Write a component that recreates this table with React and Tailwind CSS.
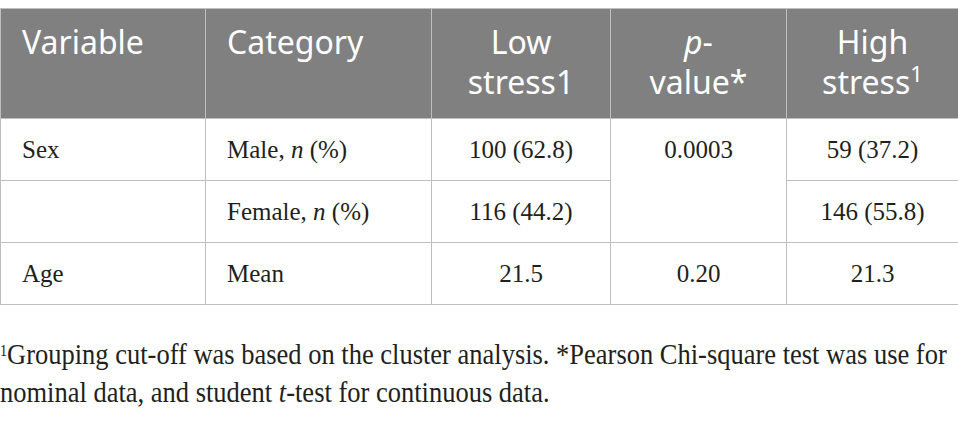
import React from "react";

const rows = [
  { variable: "Sex", category: "Male", low: "100 (62.8)", p: "0.0003", high: "59 (37.2)", pSpan: 2 },
  { variable: "", category: "Female", low: "116 (44.2)", p: null, high: "146 (55.8)" },
  { variable: "Age", category: "Mean", low: "21.5", p: "0.20", high: "21.3", plain: true },
];

const th = "border border-[#bfbfbf] align-top pt-[13px] pb-[16px] font-normal leading-[40px]";
const td = "border border-[#bfbfbf] h-[62px] align-middle";

export default function App() {
  return (
    <div className="w-[958px] h-[447px] bg-white pt-[8px] overflow-hidden">
      <table
        className="w-[958px] border-collapse table-fixed"
        style={{ fontFamily: "'Liberation Serif', serif" }}
      >
        <colgroup>
          <col className="w-[205px]" />
          <col className="w-[226px]" />
          <col className="w-[179px]" />
          <col className="w-[176px]" />
          <col className="w-[172px]" />
        </colgroup>
        <thead>
          <tr className="bg-[#808080] text-white text-[32px] font-['Noto_Sans',sans-serif]">
            <th className={`${th} text-left pl-[21px]`}>Variable</th>
            <th className={`${th} text-left pl-[21px]`}>Category</th>
            <th className={`${th} text-center`}>
              Low
              <br />
              stress1
            </th>
            <th className={`${th} text-center`}>
              <i>p</i>-
              <br />
              value*
            </th>
            <th className={`${th} text-center`}>
              High
              <br />
              stress<span className="text-[22px] align-top relative top-[0px] leading-none">1</span>
            </th>
          </tr>
        </thead>
        <tbody className="text-[25px] text-[#231f20]">
          {rows.map((r, i) => (
            <tr key={i}>
              <td className={`${td} pl-[21px]`}>{r.variable}</td>
              <td className={`${td} pl-[21px]`}>
                {r.plain ? (
                  r.category
                ) : (
                  <>
                    {r.category}, <i>n</i> (%)
                  </>
                )}
              </td>
              <td className={`${td} text-center`}>{r.low}</td>
              {r.p !== null && (
                <td rowSpan={r.pSpan || 1} className={`${td} text-center ${r.pSpan ? "align-top pt-[12px]" : ""}`}>
                  {r.p}
                </td>
              )}
              <td className={`${td} text-center`}>{r.high}</td>
            </tr>
          ))}
        </tbody>
      </table>

      <div className="mt-[30px] w-[1080px] origin-left scale-x-[0.883] text-[30px] leading-[38px] text-[#231f20] font-['Liberation_Serif',serif]">
        <p>
          <sup className="text-[16px]">1</sup>Grouping cut-off was based on the cluster analysis. *Pearson Chi-square test was use for
          <br />
          nominal data, and student <i>t</i>-test for continuous data.
        </p>
      </div>
    </div>
  );
}
